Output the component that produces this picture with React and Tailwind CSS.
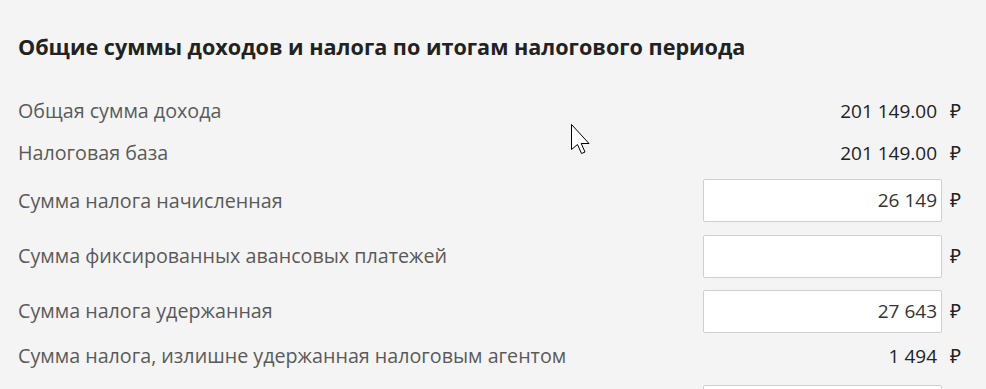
import React from "react";

const Ruble = () => (
  <span className="ml-[8px] w-[12px] text-[19px] text-[#222] leading-none">₽</span>
);

const StaticValue = ({ v }) => (
  <div className="flex items-center">
    <span className="text-[19px] text-[#222] leading-none pr-[5px]">{v}</span>
    <Ruble />
  </div>
);

const InputValue = ({ v }) => (
  <div className="flex items-center">
    <div className="w-[239px] h-[43px] bg-white border border-[#cfcfcf] rounded-[2px] flex items-center justify-end pr-[4px] text-[19px] text-[#333]">
      {v}
    </div>
    <Ruble />
  </div>
);

const Row = ({ label, h, children }) => (
  <div className={`flex items-center justify-between ${h}`}>
    <span className="text-[19.7px] text-[#5a5a5a]">{label}</span>
    {children}
  </div>
);

export default function App() {
  return (
    <div
      className="relative w-[986px] h-[389px] overflow-hidden bg-[#f4f4f4] pl-[18px] pr-[24px]"
      style={{ fontFamily: '"Open Sans", "Noto Sans", sans-serif' }}
    >
      <h2 className="pt-[32px] h-[90px] text-[21.6px] font-bold text-[#222] leading-[30px]">
        Общие суммы доходов и налога по итогам налогового периода
      </h2>
      <Row label="Общая сумма дохода" h="h-[42px]">
        <StaticValue v="201 149.00" />
      </Row>
      <Row label="Налоговая база" h="h-[42px]">
        <StaticValue v="201 149.00" />
      </Row>
      <Row label="Сумма налога начисленная" h="h-[53px]">
        <InputValue v="26 149" />
      </Row>
      <Row label="Сумма фиксированных авансовых платежей" h="h-[58px]">
        <InputValue v="" />
      </Row>
      <Row label="Сумма налога удержанная" h="h-[52px]">
        <InputValue v="27 643" />
      </Row>
      <Row label="Сумма налога, излишне удержанная налоговым агентом" h="h-[38px]">
        <StaticValue v="1 494" />
      </Row>
      <div className="flex justify-end mt-[10px]">
        <div className="flex items-center">
          <div className="w-[239px] h-[43px] bg-white border border-[#cfcfcf] rounded-[2px]" />
          <span className="ml-[8px] w-[12px]" />
        </div>
      </div>
      <svg
        className="absolute left-[571px] top-[124px]"
        width="20"
        height="30"
        viewBox="0 0 20 30"
      >
        <path
          d="M0.5 0.5 L0.5 25.5 L6.5 20.5 L10.5 29.5 L14 28 L10.2 19.5 L18 19.5 Z"
          fill="white"
          stroke="black"
          strokeWidth="1"
          strokeLinejoin="miter"
        />
      </svg>
    </div>
  );
}
